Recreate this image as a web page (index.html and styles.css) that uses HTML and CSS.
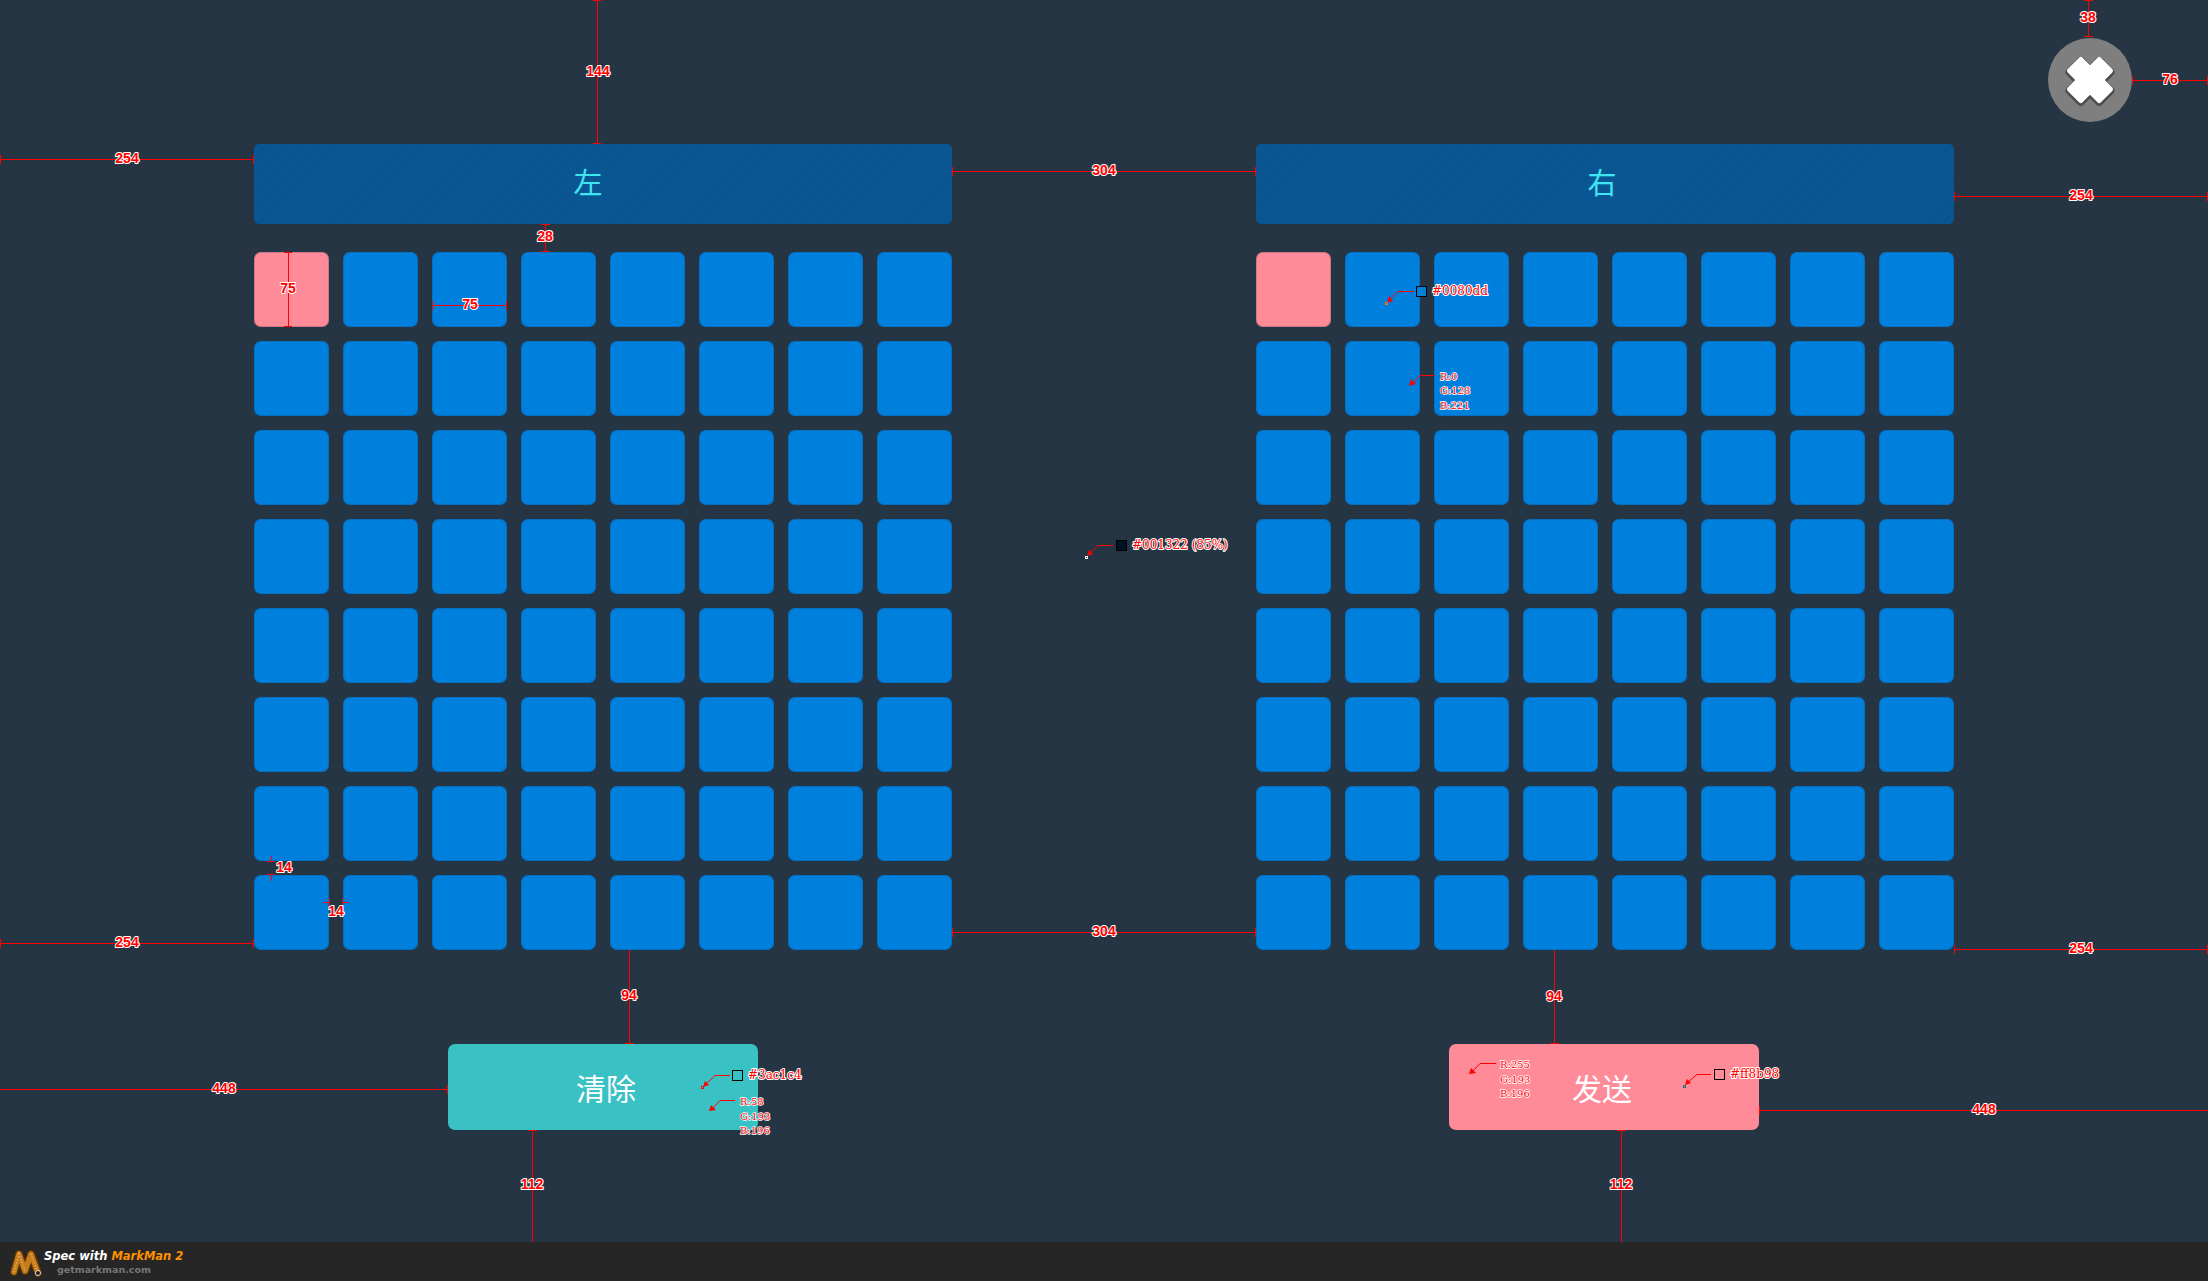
FILE: index.html
```html
<!DOCTYPE html>
<html lang="zh-CN">
<head>
    <meta charset="UTF-8">
    <title>Keypad spec</title>
    <link rel="stylesheet" href="styles.css">
</head>
<body>
    <main class="stage">
        <section class="panel">
            <div class="panel-title title-left">左</div>
            <div class="pads">
                <div class="pad on"></div><div class="pad"></div><div class="pad"></div><div class="pad"></div><div class="pad"></div><div class="pad"></div><div class="pad"></div><div class="pad"></div>
                <div class="pad"></div><div class="pad"></div><div class="pad"></div><div class="pad"></div><div class="pad"></div><div class="pad"></div><div class="pad"></div><div class="pad"></div>
                <div class="pad"></div><div class="pad"></div><div class="pad"></div><div class="pad"></div><div class="pad"></div><div class="pad"></div><div class="pad"></div><div class="pad"></div>
                <div class="pad"></div><div class="pad"></div><div class="pad"></div><div class="pad"></div><div class="pad"></div><div class="pad"></div><div class="pad"></div><div class="pad"></div>
                <div class="pad"></div><div class="pad"></div><div class="pad"></div><div class="pad"></div><div class="pad"></div><div class="pad"></div><div class="pad"></div><div class="pad"></div>
                <div class="pad"></div><div class="pad"></div><div class="pad"></div><div class="pad"></div><div class="pad"></div><div class="pad"></div><div class="pad"></div><div class="pad"></div>
                <div class="pad"></div><div class="pad"></div><div class="pad"></div><div class="pad"></div><div class="pad"></div><div class="pad"></div><div class="pad"></div><div class="pad"></div>
                <div class="pad"></div><div class="pad"></div><div class="pad"></div><div class="pad"></div><div class="pad"></div><div class="pad"></div><div class="pad"></div><div class="pad"></div>
            </div>
            <button class="action clear">清除</button>
        </section>

        <section class="panel">
            <div class="panel-title">右</div>
            <div class="pads">
                <div class="pad on"></div><div class="pad"></div><div class="pad"></div><div class="pad"></div><div class="pad"></div><div class="pad"></div><div class="pad"></div><div class="pad"></div>
                <div class="pad"></div><div class="pad"></div><div class="pad"></div><div class="pad"></div><div class="pad"></div><div class="pad"></div><div class="pad"></div><div class="pad"></div>
                <div class="pad"></div><div class="pad"></div><div class="pad"></div><div class="pad"></div><div class="pad"></div><div class="pad"></div><div class="pad"></div><div class="pad"></div>
                <div class="pad"></div><div class="pad"></div><div class="pad"></div><div class="pad"></div><div class="pad"></div><div class="pad"></div><div class="pad"></div><div class="pad"></div>
                <div class="pad"></div><div class="pad"></div><div class="pad"></div><div class="pad"></div><div class="pad"></div><div class="pad"></div><div class="pad"></div><div class="pad"></div>
                <div class="pad"></div><div class="pad"></div><div class="pad"></div><div class="pad"></div><div class="pad"></div><div class="pad"></div><div class="pad"></div><div class="pad"></div>
                <div class="pad"></div><div class="pad"></div><div class="pad"></div><div class="pad"></div><div class="pad"></div><div class="pad"></div><div class="pad"></div><div class="pad"></div>
                <div class="pad"></div><div class="pad"></div><div class="pad"></div><div class="pad"></div><div class="pad"></div><div class="pad"></div><div class="pad"></div><div class="pad"></div>
            </div>
            <button class="action send">发送</button>
        </section>
    </main>

    <footer class="credit">
        <svg class="credit-logo" width="34" height="30" viewBox="0 0 34 30">
            <path class="logo-back" d="M4 24 9 6 15 23 21 6 28 25"/>
            <path class="logo-front" d="M4 24 9 6 15 23 21 6 28 25"/>
            <path class="logo-ticks" d="M4 24 9 6 15 23M21 6 28 25"/>
            <circle class="logo-eye" cx="28" cy="25" r="2.500"/>
        </svg>
        <div class="credit-text">
            <div class="credit-line">Spec with <span class="credit-name">MarkMan 2</span></div>
            <div class="credit-url">getmarkman.com</div>
        </div>
    </footer>

    <button class="close" aria-label="close">
        <svg width="84" height="84" viewBox="0 0 84 84">
            <g transform="rotate(45 42 42)">
                <path class="close-edge" d="M34 21H50V34H63V50H50V63H34V50H21V34H34Z"/>
                <path class="close-cross" d="M34 21H50V34H63V50H50V63H34V50H21V34H34Z"/>
            </g>
        </svg>
    </button>

    <!-- markman annotations -->
    <svg class="marks" width="2208" height="1281" viewBox="0 0 2208 1281">
        <g class="lines">
            <path d="M597.500 0V144M593 .5H601M593 143.500H601"/>
            <path d="M0 159.500H254M.5 155V164M253.500 155V164"/>
            <path d="M545.500 224V252M541 224.500H550M541 251.500H550"/>
            <path d="M288.500 252V327M284 252.500H292M284 326.500H292"/>
            <path d="M432 305.500H507M432.500 301V310M506.500 301V310"/>
            <path d="M952 171.500H1256M952.500 167V176M1255.500 167V176"/>
            <path d="M1954 196.500H2208M1954.500 192V201M2207.500 192V201"/>
            <path d="M2088.500 0V37M2084 .5H2093M2084 36.500H2093"/>
            <path d="M2132 80.500H2208M2132.500 76V85M2207.500 76V85"/>
            <path d="M0 943.500H254M.5 939V948M253.500 939V948"/>
            <path d="M952 932.500H1256M952.500 928V937M1255.500 928V937"/>
            <path d="M1954 949.500H2208M1954.500 945V954M2207.500 945V954"/>
            <path d="M271.500 856V861M271.500 875V881M267 861.500H275M267 874.500H275"/>
            <path d="M323 902.500H329M343 902.500H349M329.500 898V907M342.500 898V907"/>
            <path d="M629.500 950V1044M625 1043.500H634"/>
            <path d="M1554.500 950V1044M1550 1043.500H1559"/>
            <path d="M0 1089.500H448M447.500 1085V1094"/>
            <path d="M1759 1110.500H2208M1759.500 1106V1115"/>
            <path d="M532.500 1130V1242M528 1130.500H537"/>
            <path d="M1621.500 1130V1242M1617 1130.500H1626"/>
            <path d="M1414 291.500H1398L1389 300"/>
            <path d="M1435 375.500H1420L1411 385"/>
            <path d="M1113 545.500H1098L1089 554"/>
            <path d="M730 1075.500H715L705 1085"/>
            <path d="M735 1100.500H720L711 1110"/>
            <path d="M1496 1063.500H1480L1471 1073"/>
            <path d="M1711 1074.500H1697L1687 1083"/>
        </g>

        <g class="heads">
            <path d="M1387 303 1389 296 1393 301Z"/>
            <path d="M1409 386 1411 379 1416 384Z"/>
            <path d="M1087 556 1089 550 1093 554Z"/>
            <path d="M703 1087 705 1081 709 1085Z"/>
            <path d="M709 1111 711 1105 716 1110Z"/>
            <path d="M1469 1074 1471 1068 1476 1073Z"/>
            <path d="M1685 1085 1687 1079 1691 1083Z"/>
        </g>

        <g class="probes">
            <rect class="probe-orange" x="1385.500" y="302.500" width="2" height="2"/>
            <rect class="probe-white" x="1085.500" y="556.500" width="2" height="2"/>
            <rect class="probe-red" x="701.500" y="1086.500" width="2" height="2"/>
            <rect class="probe-teal" x="1683.500" y="1085.500" width="2" height="2"/>
        </g>

        <g class="swatches">
            <rect class="swatch-blue" x="1416.500" y="286.500" width="10" height="10"/>
            <rect class="swatch-dark" x="1116.500" y="540.500" width="10" height="10"/>
            <rect class="swatch-teal" x="732.500" y="1070.500" width="10" height="10"/>
            <rect class="swatch-pink" x="1714.500" y="1069.500" width="10" height="10"/>
        </g>

        <g class="sizes">
            <text x="598" y="71">144</text>
            <text x="127" y="158">254</text>
            <text x="545" y="236">28</text>
            <text x="288" y="288">75</text>
            <text x="470" y="304">75</text>
            <text x="1104" y="170">304</text>
            <text x="2081" y="195">254</text>
            <text x="2088" y="17">38</text>
            <text x="2170" y="79">76</text>
            <text x="127" y="942">254</text>
            <text x="1104" y="931">304</text>
            <text x="2081" y="948">254</text>
            <text x="284" y="867">14</text>
            <text x="336" y="911">14</text>
            <text x="629" y="995">94</text>
            <text x="1554" y="996">94</text>
            <text x="224" y="1088">448</text>
            <text x="1984" y="1109">448</text>
            <text x="532" y="1184">112</text>
            <text x="1621" y="1184">112</text>
        </g>

        <g class="colors">
            <text x="1432" y="291">#0080dd</text>
            <text x="1132" y="545">#001322 (85%)</text>
            <text x="748" y="1075">#3ac1c4</text>
            <text x="1730" y="1074">#ff8b98</text>
        </g>
        <g class="channels">
            <text x="1440" y="376">R:0</text>
            <text x="1440" y="390">G:128</text>
            <text x="1440" y="405">B:221</text>
            <text x="740" y="1101">R:58</text>
            <text x="740" y="1116">G:193</text>
            <text x="740" y="1130">B:196</text>
            <text x="1500" y="1064">R:255</text>
            <text x="1500" y="1079">G:193</text>
            <text x="1500" y="1093">B:196</text>
        </g>
    </svg>
</body>
</html>
```

FILE: styles.css
```css
html, body {
    margin: 0;
    height: 1281px;
    overflow: hidden;
}
body {
    position: relative;
    display: flex;
    flex-direction: column;
    background-color: #263544;
    font-family: "Noto Sans CJK SC", "Noto Sans", sans-serif;
}

.stage {
    flex: 1;
    display: flex;
    justify-content: center;
    gap: 304px;
    padding-top: 144px;
}
.panel {
    width: 698px;
    display: flex;
    flex-direction: column;
}
.panel-title {
    height: 80px;
    margin-bottom: 28px;
    display: flex;
    align-items: center;
    justify-content: center;
    padding: 0 6px 6px 0;
    box-sizing: border-box;
    border-radius: 5px;
    color: #3fe6f2;
    font-size: 29px;
    background-color: #0a5796;
    background-image: repeating-linear-gradient(135deg, rgba(0,0,0,0.06) 0 1px, transparent 1px 3px);
}
.title-left {
    padding-right: 30px;
}

.pads {
    display: grid;
    grid-template-columns: repeat(8, 75px);
    grid-auto-rows: 75px;
    gap: 14px;
}
.pad {
    border-radius: 7px;
    background-color: #0080dd;
    box-shadow: inset 0 0 0 1px rgba(20,60,110,0.25);
}
.pad.on {
    background-color: #ff8b98;
    box-shadow: inset 0 0 0 1px rgba(90,70,90,0.3);
}

.action {
    width: 310px;
    height: 86px;
    margin-top: 94px;
    padding: 0;
    border: 0;
    border-radius: 7px;
    color: #fff;
    font-family: inherit;
    font-size: 30px;
}
.clear {
    margin-left: 194px;
    padding-left: 6px;
    background-color: #3ac1c4;
}
.send {
    margin-left: 193px;
    padding-right: 4px;
    background-color: #ff8b98;
}

.credit {
    height: 39px;
    display: flex;
    align-items: flex-start;
    padding: 6px 0 0 10px;
    box-sizing: border-box;
    background-color: #262626;
}
.credit-logo {
    flex: none;
}
.logo-back {
    fill: none;
    stroke: #5a3506;
    stroke-width: 8;
    stroke-linecap: round;
    stroke-linejoin: round;
}
.logo-front {
    fill: none;
    stroke: #c67c1c;
    stroke-width: 5.500;
    stroke-linecap: round;
    stroke-linejoin: round;
}
.logo-ticks {
    fill: none;
    stroke: #f0c070;
    stroke-width: 1.500;
    stroke-dasharray: 1 2;
}
.logo-eye {
    fill: #1c1c1c;
    stroke: #ddd;
    stroke-width: 1;
}
.credit-text {
    font-family: "DejaVu Sans", sans-serif;
    font-weight: bold;
    font-style: italic;
}
.credit-line {
    color: #fff;
    font-size: 11.500px;
    line-height: 16px;
}
.credit-name {
    color: #ff9000;
}
.credit-url {
    color: #777;
    font-size: 9.500px;
    font-style: normal;
    line-height: 12px;
    margin-left: 13px;
}

.close {
    position: absolute;
    left: 2048px;
    top: 38px;
    width: 84px;
    height: 84px;
    padding: 0;
    border: 0;
    border-radius: 50%;
    background-color: #7f7f7f;
}
.close svg {
    display: block;
}
.close-edge {
    fill: #4d4d4d;
    stroke: #4d4d4d;
    stroke-width: 8;
    stroke-linejoin: round;
    transform: translate(1px, 1px);
}
.close-cross {
    fill: #fff;
    stroke: #fff;
    stroke-width: 5;
    stroke-linejoin: round;
}

.marks {
    position: absolute;
    left: 0;
    top: 0;
    pointer-events: none;
}
.lines path {
    fill: none;
    stroke: #f00;
    stroke-width: 1;
}
.heads path {
    fill: #f00;
}
.probes rect {
    fill: none;
    stroke-width: 1;
}
.probe-orange { stroke: #f07a1a; }
.probe-white { stroke: #fff; }
.probe-red { stroke: #f01020; }
.probe-teal { stroke: #26707a; }

.swatches rect {
    stroke: #000;
    stroke-width: 1;
    shape-rendering: crispEdges;
}
.swatch-blue { fill: #0080dd; }
.swatch-dark { fill: #001322; }
.swatch-teal { fill: #3ac1c4; }
.swatch-pink { fill: #ff8b98; }

.sizes text, .colors text, .channels text {
    fill: #f00;
    stroke: #fff;
    stroke-width: 2px;
    stroke-linejoin: round;
    paint-order: stroke;
    dominant-baseline: central;
}
.sizes text {
    font-family: "Liberation Sans", sans-serif;
    font-size: 14px;
    font-weight: bold;
    text-anchor: middle;
}
.colors text {
    font-family: "DejaVu Serif", serif;
    font-size: 12px;
}
.channels text {
    font-family: "DejaVu Serif", serif;
    font-size: 10px;
    stroke-width: 1.500px;
}
```
